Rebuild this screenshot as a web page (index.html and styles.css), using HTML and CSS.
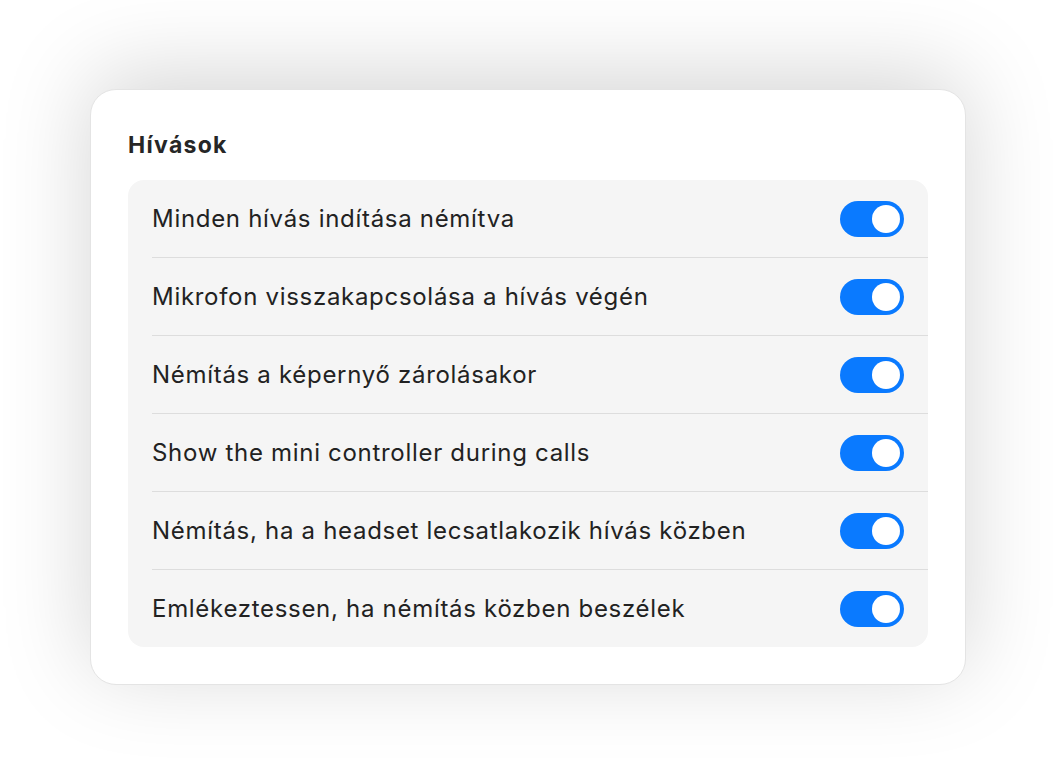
FILE: index.html
```html
<!DOCTYPE html>
<html lang="hu">
<head>
<meta charset="utf-8">
<link rel="stylesheet" href="styles.css">
</head>
<body>
<div class="stage">
  <section class="card">
    <h2 class="title">Hívások</h2>
    <ul class="list">
      <li class="row"><span class="label">Minden hívás indítása némítva</span><span class="toggle"><span class="knob"></span></span></li>
      <li class="row"><span class="label">Mikrofon visszakapcsolása a hívás végén</span><span class="toggle"><span class="knob"></span></span></li>
      <li class="row"><span class="label">Némítás a képernyő zárolásakor</span><span class="toggle"><span class="knob"></span></span></li>
      <li class="row"><span class="label">Show the mini controller during calls</span><span class="toggle"><span class="knob"></span></span></li>
      <li class="row"><span class="label">Némítás, ha a headset lecsatlakozik hívás közben</span><span class="toggle"><span class="knob"></span></span></li>
      <li class="row"><span class="label">Emlékeztessen, ha némítás közben beszélek</span><span class="toggle"><span class="knob"></span></span></li>
    </ul>
  </section>
</div>
</body>
</html>
```
FILE: styles.css
```css
html, body {
  margin: 0;
  padding: 0;
  background: #ffffff;
}
body {
  font-family: Inter, "Noto Sans", "DejaVu Sans", sans-serif;
  color: #1f1f1f;
}
.stage {
  width: 1056px;
  height: 774px;
  padding: 89px 0 0 90px;
  box-sizing: border-box;
}
.card {
  width: 876px;
  height: 596px;
  box-sizing: border-box;
  background: #ffffff;
  border: 1px solid #e4e4e4;
  border-radius: 26px;
  box-shadow: 0 -14px 90px rgba(0, 0, 0, 0.17);
  padding: 0 37px;
}
.title {
  margin: 0;
  padding-top: 40px;
  height: 50px;
  font-size: 23px;
  line-height: 30px;
  font-weight: 700;
  color: #262626;
  letter-spacing: 1.3px;
}
.list {
  list-style: none;
  margin: 0;
  padding: 0;
  background: #f5f5f5;
  border-radius: 16px;
}
.row {
  display: flex;
  align-items: center;
  justify-content: space-between;
  height: 77px;
  margin-left: 24px;
  padding-right: 24px;
  border-top: 1px solid #dddddd;
}
.row:first-child {
  border-top: none;
}
.label {
  font-size: 24px;
  line-height: 30px;
  color: #222222;
  letter-spacing: 0.7px;
}
.toggle {
  width: 64px;
  height: 36px;
  border-radius: 18px;
  background: #0a7aff;
  box-sizing: border-box;
  padding: 4px;
  display: flex;
  justify-content: flex-end;
}
.knob {
  width: 28px;
  height: 28px;
  border-radius: 50%;
  background: #ffffff;
}
```
